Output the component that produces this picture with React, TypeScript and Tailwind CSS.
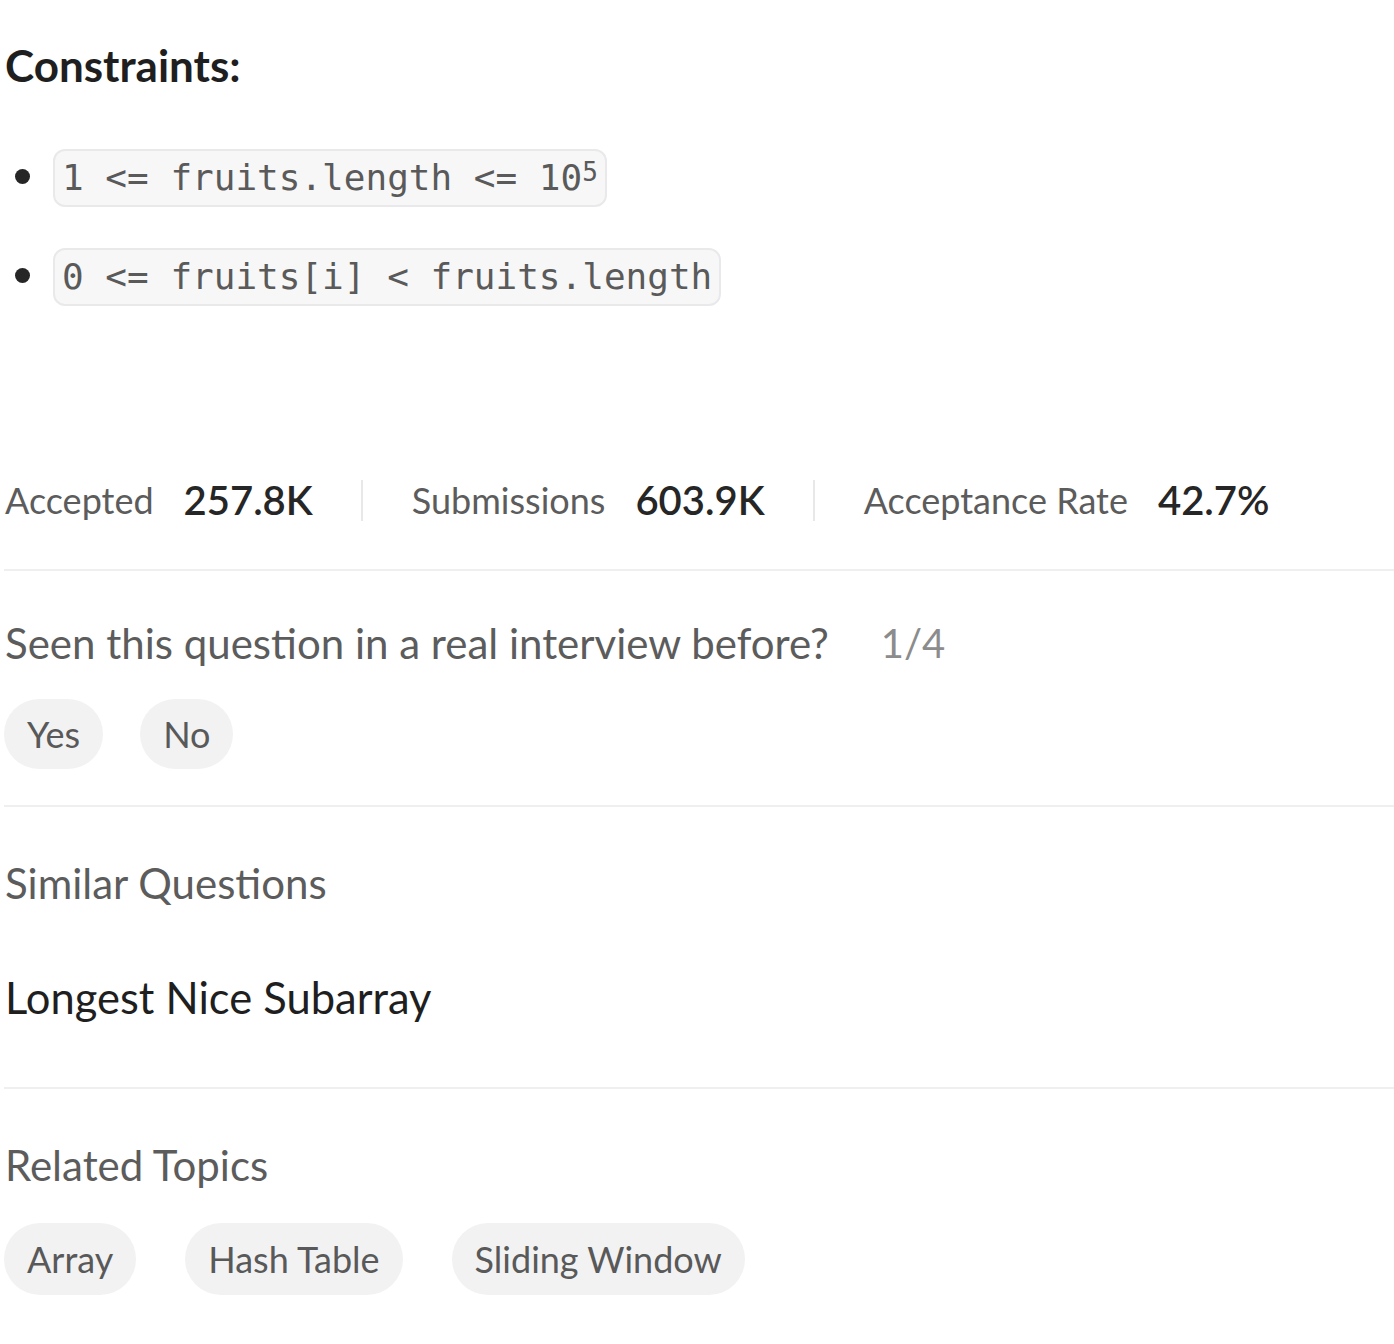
import React from "react";

const sans = "font-['Lato','Noto_Sans',sans-serif]";

function Code({ children }: { children: React.ReactNode }) {
  return (
    <span className="inline-flex items-center h-[58px] px-[7px] rounded-[12px] border-2 border-[#e9e9eb] bg-[#f7f7f8] font-['DejaVu_Sans_Mono',monospace] text-[36px] text-[#5a5a5a] whitespace-pre leading-none">
      {children}
    </span>
  );
}

function Bullet({ children }: { children: React.ReactNode }) {
  return (
    <div className="flex items-center h-[58px]">
      <div className="w-[49px] flex pl-[11px] pb-[4px]">
        <span className="w-[15px] h-[15px] rounded-full bg-[#262626]" />
      </div>
      <Code>{children}</Code>
    </div>
  );
}

function Stat({ label, value }: { label: string; value: string }) {
  return (
    <div className="flex items-center gap-[30px]">
      <span className="text-[36px] text-[#5c5c5c]">{label}</span>
      <span className="text-[40px] font-semibold text-[#262626]">{value}</span>
    </div>
  );
}

function Pill({ children, h }: { children: React.ReactNode; h: string }) {
  return (
    <span className={`inline-flex items-center rounded-full bg-[#f2f2f3] px-[23px] text-[36px] text-[#595959] ${h}`}>
      {children}
    </span>
  );
}

export default function App() {
  return (
    <div className={`w-[1394px] h-[1344px] bg-white pl-[4px] ${sans}`}>
      <div className="pt-[40px]">
        <div className="h-[50px] flex items-center pl-[1px] text-[44px] font-bold text-[#1f1f1f]">Constraints:</div>
      </div>
      <div className="mt-[59px]">
        <Bullet>
          1 {"<="} fruits.length {"<="} 10<sup className="text-[26px] relative -top-[6px]">5</sup>
        </Bullet>
        <div className="mt-[41px]">
          <Bullet>0 {"<="} fruits[i] {"<"} fruits.length</Bullet>
        </div>
      </div>
      <div className="mt-[164px] h-[60px] flex items-center pl-[1px]">
        <Stat label="Accepted" value="257.8K" />
        <div className="ml-[48px] mr-[49px] w-[2px] h-[41px] bg-[#e8e8e8]" />
        <Stat label="Submissions" value="603.9K" />
        <div className="ml-[48px] mr-[49px] w-[2px] h-[41px] bg-[#e8e8e8]" />
        <Stat label="Acceptance Rate" value="42.7%" />
      </div>
      <div className="mt-[39px] border-t-2 border-[#efefef]" />
      <div className="mt-[42px] h-[60px] flex items-center gap-[52px] pl-[1px]">
        <span className="text-[42px] text-[#5c5c5c]">Seen this question in a real interview before?</span>
        <span className="text-[40px] text-[#8c8c8c]">1/4</span>
      </div>
      <div className="mt-[26px] flex gap-[37px]">
        <Pill h="h-[70px]">Yes</Pill>
        <Pill h="h-[70px]">No</Pill>
      </div>
      <div className="mt-[36px] border-t-2 border-[#efefef]" />
      <div className="mt-[46px] h-[60px] flex items-center pl-[1px] text-[42px] text-[#5c5c5c]">Similar Questions</div>
      <div className="mt-[55px] h-[60px] flex items-center pl-[1px] text-[43.5px] font-normal text-[#1f1f1f]">Longest Nice Subarray</div>
      <div className="mt-[59px] border-t-2 border-[#efefef]" />
      <div className="mt-[46px] h-[60px] flex items-center pl-[1px] text-[42px] text-[#5c5c5c]">Related Topics</div>
      <div className="mt-[28px] flex gap-[49px]">
        <Pill h="h-[72px]">Array</Pill>
        <Pill h="h-[72px]">Hash Table</Pill>
        <Pill h="h-[72px]">Sliding Window</Pill>
      </div>
    </div>
  );
}
